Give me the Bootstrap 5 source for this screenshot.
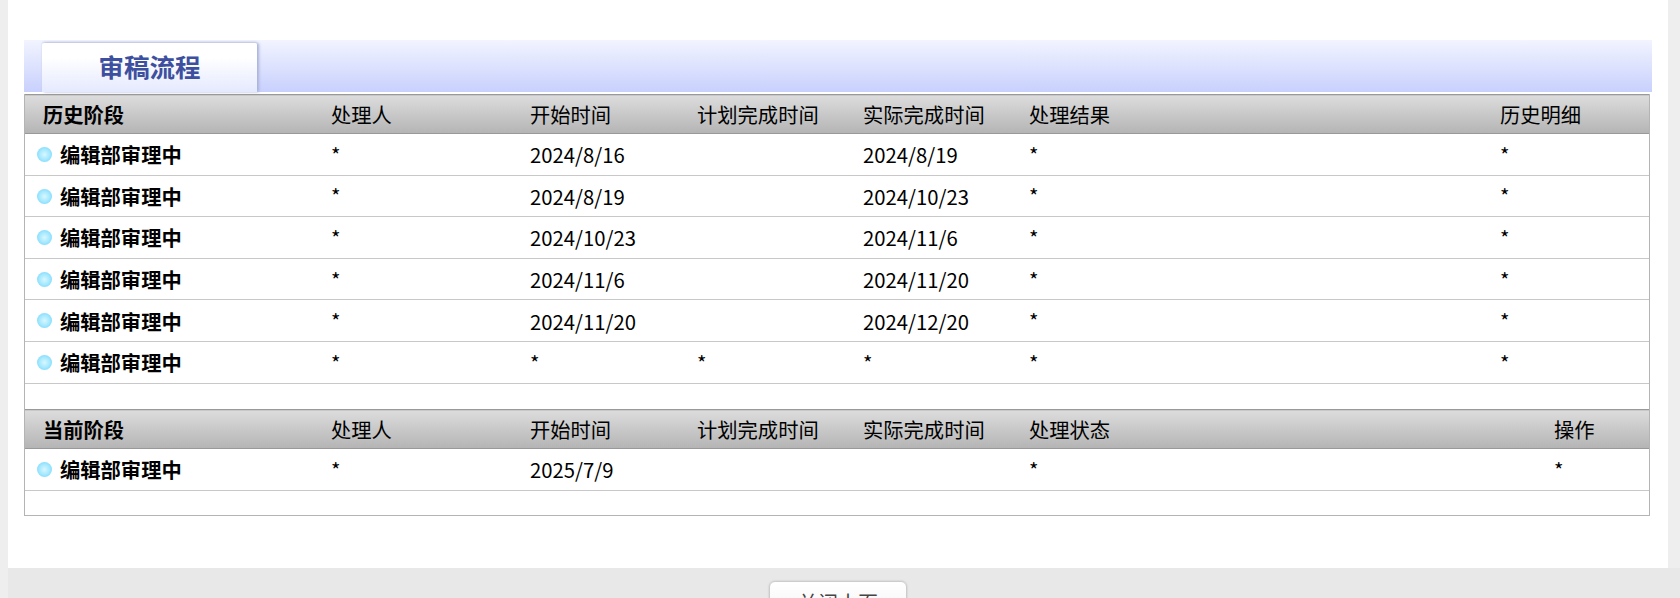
<!DOCTYPE html>
<html lang="zh">
<head>
<meta charset="utf-8">
<title>审稿流程</title>
<link href="https://cdn.jsdelivr.net/npm/bootstrap@5.3.0/dist/css/bootstrap.min.css" rel="stylesheet">
<style>
html,body{height:598px;overflow:hidden}
body{background:#eee;font-family:"Noto Sans CJK SC","Noto Sans",sans-serif;font-size:20.3px;color:#000}
.sheet{margin:0 12px 0 8px;background:#fff;height:568px;padding:40px 16px 0}
.foot-area{background:#e8e8e8;margin:0 0 0 8px;height:30px;padding-top:13px;overflow:hidden}
.flow-band{height:52px;background:linear-gradient(#f2f4ff,#c8d0fd);padding-left:18px}
.flow-tab{width:215px;height:49px;margin-top:3px;background:linear-gradient(#fff 30%,#e4e9fe);box-shadow:2px 0 3px #a9b1d8,0 -1px 2px #d0d4e6;border-radius:2px 2px 0 0;font-size:25.5px;font-weight:700;color:#3d4f9f;line-height:46px;text-align:center}
.flow-wrap{margin-top:2px;width:1626px;border:1px solid #b4b4b4;border-top:0}
.flow-table{width:100%;table-layout:fixed;border-collapse:collapse;margin:0}
.flow-table td,.flow-table th{padding:0;font-weight:400;white-space:nowrap;vertical-align:middle;line-height:28px}
.flow-table .head-row th{height:39px;background:linear-gradient(#dcdcdc,#b4b4b4);border-top:1px solid #999;border-bottom:1px solid #999}
.flow-table .head-row th.stage{font-weight:700;padding-left:18px}
.flow-table .body-row td{height:41.6px;border-bottom:1px solid #c8c8c8}
.flow-table .body-row td.star{padding-bottom:1px}
.flow-table .body-row td.stage{font-weight:700;padding-left:35px;position:relative}
.dot{position:absolute;left:12px;top:13px;width:15px;height:15px;border-radius:50%;background:radial-gradient(circle at 50% 50%,#d8f7ff 0,#a4e8ff 50%,#62d0fc 100%)}
.gap-row td{height:26.5px}
.gap-row-end td{height:25px}
.flow-table .op{padding-left:54px}
.close-page{display:block;width:138px;margin-left:761px;height:44px;background:linear-gradient(#fff,#f2f2f2);border:1px solid #ccc;border-radius:6px;box-shadow:0 0 2px #bbb;font-size:20px;line-height:38px;color:#444;padding:0;text-align:center}
</style>
</head>
<body>
<div class="sheet">
  <div class="flow-band d-flex"><div class="flow-tab">审稿流程</div></div>
  <div class="flow-wrap">
    <table class="flow-table">
      <colgroup><col style="width:306px"><col style="width:199px"><col style="width:167px"><col style="width:166px"><col style="width:166px"><col style="width:471px"><col></colgroup>
      <tr class="head-row"><th class="stage">历史阶段</th><th>处理人</th><th>开始时间</th><th>计划完成时间</th><th>实际完成时间</th><th>处理结果</th><th>历史明细</th></tr>
      <tr class="body-row"><td class="stage"><span class="dot"></span>编辑部审理中</td><td class="star">*</td><td>2024/8/16</td><td></td><td>2024/8/19</td><td class="star">*</td><td class="star">*</td></tr>
      <tr class="body-row"><td class="stage"><span class="dot"></span>编辑部审理中</td><td class="star">*</td><td>2024/8/19</td><td></td><td>2024/10/23</td><td class="star">*</td><td class="star">*</td></tr>
      <tr class="body-row"><td class="stage"><span class="dot"></span>编辑部审理中</td><td class="star">*</td><td>2024/10/23</td><td></td><td>2024/11/6</td><td class="star">*</td><td class="star">*</td></tr>
      <tr class="body-row"><td class="stage"><span class="dot"></span>编辑部审理中</td><td class="star">*</td><td>2024/11/6</td><td></td><td>2024/11/20</td><td class="star">*</td><td class="star">*</td></tr>
      <tr class="body-row"><td class="stage"><span class="dot"></span>编辑部审理中</td><td class="star">*</td><td>2024/11/20</td><td></td><td>2024/12/20</td><td class="star">*</td><td class="star">*</td></tr>
      <tr class="body-row"><td class="stage"><span class="dot"></span>编辑部审理中</td><td class="star">*</td><td class="star">*</td><td class="star">*</td><td class="star">*</td><td class="star">*</td><td class="star">*</td></tr>
      <tr class="gap-row"><td colspan="7"></td></tr>
      <tr class="head-row"><th class="stage">当前阶段</th><th>处理人</th><th>开始时间</th><th>计划完成时间</th><th>实际完成时间</th><th>处理状态</th><th class="op">操作</th></tr>
      <tr class="body-row"><td class="stage"><span class="dot"></span>编辑部审理中</td><td class="star">*</td><td>2025/7/9</td><td></td><td></td><td class="star">*</td><td class="star op">*</td></tr>
      <tr class="gap-row-end"><td colspan="7"></td></tr>
    </table>
  </div>
</div>
<div class="foot-area"><button type="button" class="close-page">关闭本页</button></div>
</body>
</html>
